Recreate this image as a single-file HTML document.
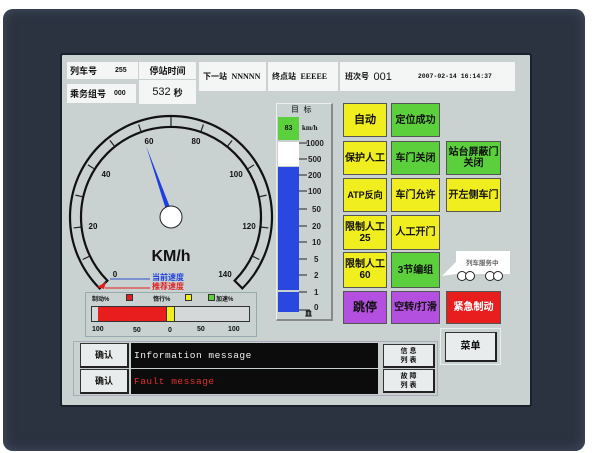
<!DOCTYPE html>
<html><head><meta charset="utf-8"><style>
*{margin:0;padding:0;box-sizing:border-box}
body{width:600px;height:453px;background:#fff;position:relative;overflow:hidden;font-family:"Liberation Sans","Noto Sans CJK SC",sans-serif;font-weight:bold;color:#111}
.a{position:absolute}
#bez{left:3px;top:9px;width:582px;height:442px;background:#2b3240;border-radius:10px;box-shadow:inset 0 0 12px #455064}
#scr{left:60px;top:53px;width:472px;height:354px;background:#c9d1d1;border:2px solid #1a202c;border-radius:3px}
.c{background:#f4f6f6;font-size:9px;display:flex;align-items:center}
.b{display:flex;align-items:center;justify-content:center;text-align:center;font-size:10px;line-height:11px;border:1px solid #555;font-family:"Liberation Sans","WenQuanYi Zen Hei",sans-serif}
.y{background:#f0ee1e}.g{background:#5cd03c}.p{background:#b450e0}.r{background:#e81e1e;color:#fff}
.btn{background:#e8ecec;border:1px solid #333;border-right:2px solid #222;border-bottom:2px solid #222;font-size:9px;display:flex;align-items:center;justify-content:center;text-align:center;line-height:9px}
.msg{background:#0c0c0c;font-family:"Liberation Mono",monospace;font-size:9.5px;font-weight:normal;display:flex;align-items:center;padding-left:3px;letter-spacing:.5px}
</style></head><body>
<div class="a" id="bez"></div>
<div class="a" id="scr"></div>
<div class="a c" style="left:67px;top:62px;width:71px;height:17px;padding-left:3px">列车号<span style="margin-left:18px;font-size:7px">255</span></div>
<div class="a c" style="left:139px;top:62px;width:57px;height:17px;justify-content:center">停站时间</div>
<div class="a c" style="left:67px;top:84px;width:69px;height:19px;padding-left:3px">乘务组号<span style="margin-left:8px;font-size:7px">000</span></div>
<div class="a c" style="left:139px;top:80px;width:57px;height:24px;justify-content:center;font-size:11px;font-weight:normal">532 <b style="font-size:9px;margin-left:3px">秒</b></div>
<div class="a c" style="left:199px;top:62px;width:67px;height:29px;padding-left:4px;font-size:8px">下一站&nbsp;&nbsp;<span style="font-family:'Liberation Serif';font-size:8px">NNNNN</span></div>
<div class="a c" style="left:268px;top:62px;width:70px;height:29px;padding-left:4px;font-size:8px">终点站&nbsp;&nbsp;<span style="font-family:'Liberation Serif';font-size:8px">EEEEE</span></div>
<div class="a c" style="left:340px;top:62px;width:175px;height:29px;padding-left:5px;font-size:8px">班次号&nbsp;&nbsp;<span style="font-size:11px;font-weight:normal">001</span><span style="margin-left:26px;font-size:6.5px;font-family:'Liberation Mono'">2007-02-14 16:14:37</span></div>
<svg class="a" style="left:0;top:0" width="600" height="453">
<path d="M99.6 288.4 A101 101 0 1 1 242.4 288.4 L234.6 280.6 A90 90 0 1 0 107.4 280.6 Z" fill="#c9d1d1" stroke="#111" stroke-width="2.2"/>
<g stroke="#222" stroke-width="1.2">
<line x1="171" y1="119" x2="171" y2="126" transform="rotate(-135 171 217)"/>
<line x1="171" y1="119" x2="171" y2="126" transform="rotate(-115.7 171 217)"/>
<line x1="171" y1="119" x2="171" y2="126" transform="rotate(-96.4 171 217)"/>
<line x1="171" y1="119" x2="171" y2="126" transform="rotate(-77.1 171 217)"/>
<line x1="171" y1="119" x2="171" y2="126" transform="rotate(-57.9 171 217)"/>
<line x1="171" y1="119" x2="171" y2="126" transform="rotate(-38.6 171 217)"/>
<line x1="171" y1="119" x2="171" y2="126" transform="rotate(-19.3 171 217)"/>
<line x1="171" y1="117" x2="171" y2="126" transform="rotate(0 171 217)"/>
<line x1="171" y1="119" x2="171" y2="126" transform="rotate(19.3 171 217)"/>
<line x1="171" y1="119" x2="171" y2="126" transform="rotate(38.6 171 217)"/>
<line x1="171" y1="119" x2="171" y2="126" transform="rotate(57.9 171 217)"/>
<line x1="171" y1="119" x2="171" y2="126" transform="rotate(77.1 171 217)"/>
<line x1="171" y1="119" x2="171" y2="126" transform="rotate(96.4 171 217)"/>
<line x1="171" y1="119" x2="171" y2="126" transform="rotate(115.7 171 217)"/>
</g>
<polygon points="171,142 168.5,214 173.5,214" fill="#1e3ee0" transform="rotate(-19.3 171 217)"/>
<circle cx="171" cy="217" r="11" fill="#fff" stroke="#222" stroke-width="1"/>
<g font-family="Liberation Sans" font-weight="bold" font-size="8" fill="#111" text-anchor="middle">
<text x="149" y="144">60</text><text x="196" y="144">80</text>
<text x="106" y="177">40</text><text x="236" y="177">100</text>
<text x="93" y="229">20</text><text x="249" y="229">120</text>
<text x="115" y="277">0</text><text x="225" y="277">140</text>
</g>
<text x="171" y="261" font-family="Liberation Sans" font-size="16" text-anchor="middle" fill="#111">KM/h</text>
<line x1="110" y1="279" x2="150" y2="279" stroke="#3050d0" stroke-width="1"/>
<line x1="105" y1="288" x2="150" y2="288" stroke="#e02020" stroke-width="1"/>
<polygon points="97,287 106,282 104,289" fill="#e02020"/>
<text x="152" y="280" font-size="8" fill="#2040e0" font-family="Noto Sans CJK SC" font-weight="bold">当前速度</text>
<text x="152" y="289" font-size="8" fill="#e02020" font-family="Noto Sans CJK SC" font-weight="bold">推荐速度</text>
</svg>
<div class="a" style="left:85px;top:292px;width:172px;height:45px;border:1px solid #9aa;"></div>
<div class="a" style="left:92px;top:294px;font-size:6px">制动%</div>
<div class="a" style="left:126px;top:294px;width:7px;height:7px;background:#e02020;border:1px solid #333"></div>
<div class="a" style="left:153px;top:294px;font-size:6px">惰行%</div>
<div class="a" style="left:185px;top:294px;width:7px;height:7px;background:#f0ee1e;border:1px solid #333"></div>
<div class="a" style="left:208px;top:294px;width:7px;height:7px;background:#5cd03c;border:1px solid #333"></div>
<div class="a" style="left:216px;top:294px;font-size:6px">加速%</div>
<div class="a" style="left:91px;top:306px;width:159px;height:16px;background:#d4d8d8;border:1px solid #333"></div>
<div class="a" style="left:98px;top:307px;width:69px;height:14px;background:#e81e1e;border-right:1px solid #333"></div>
<div class="a" style="left:167px;top:307px;width:8px;height:14px;background:#f0ee1e;border-right:1px solid #333"></div>
<div class="a" style="left:92px;top:326px;font-size:7px">100</div>
<div class="a" style="left:133px;top:327px;font-size:7px">50</div>
<div class="a" style="left:168px;top:327px;font-size:7px">0</div>
<div class="a" style="left:197px;top:326px;font-size:7px">50</div>
<div class="a" style="left:228px;top:326px;font-size:7px">100</div>
<div class="a" style="left:276px;top:103px;width:57px;height:218px;border:1px solid #eee;border-right:2px solid #888;border-bottom:2px solid #888"></div>
<div class="a" style="left:291px;top:104px;font-size:8px;font-weight:normal">目&nbsp;&nbsp;标</div>
<div class="a" style="left:278px;top:117px;width:21px;height:23px;background:#5cd03c;font-size:7px;display:flex;align-items:center;justify-content:center">83</div>
<div class="a" style="left:302px;top:124px;font-size:7px;font-family:'Liberation Serif'">km/h</div>
<div class="a" style="left:278px;top:142px;width:21px;height:24px;background:#fff"></div>
<div class="a" style="left:278px;top:167px;width:21px;height:123px;background:#2a48e0"></div>
<div class="a" style="left:278px;top:292px;width:21px;height:20px;background:#2a48e0"></div>
<svg class="a" style="left:296px;top:138px" width="40" height="180">
<g stroke="#222" stroke-width="1"><line x1="3" y1="5" x2="11" y2="5"/><line x1="3" y1="21" x2="11" y2="21"/><line x1="3" y1="37" x2="11" y2="37"/><line x1="3" y1="53" x2="11" y2="53"/><line x1="3" y1="71" x2="11" y2="71"/><line x1="3" y1="88" x2="11" y2="88"/><line x1="3" y1="104" x2="11" y2="104"/><line x1="3" y1="121" x2="11" y2="121"/><line x1="3" y1="137" x2="11" y2="137"/><line x1="3" y1="154" x2="11" y2="154"/><line x1="3" y1="172" x2="14" y2="172"/></g>
<g font-family="Liberation Sans" font-size="8" fill="#222"><text x="10" y="8">1000</text><text x="12" y="24">500</text><text x="12" y="40">200</text><text x="12" y="56">100</text><text x="16" y="74">50</text><text x="16" y="91">20</text><text x="16" y="107">10</text><text x="18" y="124">5</text><text x="18" y="140">2</text><text x="18" y="157">1</text><text x="18" y="172">0</text></g>
<text x="9" y="178" font-size="7" font-family="Noto Sans CJK SC">皿</text>
</svg>
<div class="a b y" style="left:343px;top:103px;width:44px;height:34px;font-size:11px">自动</div>
<div class="a b g" style="left:391px;top:103px;width:49px;height:34px">定位成功</div>
<div class="a b y" style="left:343px;top:141px;width:44px;height:34px">保护人工</div>
<div class="a b g" style="left:391px;top:141px;width:49px;height:34px">车门关闭</div>
<div class="a b g" style="left:446px;top:141px;width:55px;height:34px">站台屏蔽门<br>关闭</div>
<div class="a b y" style="left:343px;top:178px;width:44px;height:34px;font-size:9px">ATP反向</div>
<div class="a b y" style="left:391px;top:178px;width:49px;height:34px">车门允许</div>
<div class="a b y" style="left:446px;top:178px;width:55px;height:34px">开左侧车门</div>
<div class="a b y" style="left:343px;top:215px;width:44px;height:35px">限制人工<br>25</div>
<div class="a b y" style="left:391px;top:215px;width:49px;height:35px">人工开门</div>
<div class="a b y" style="left:343px;top:252px;width:44px;height:36px">限制人工<br>60</div>
<div class="a b g" style="left:391px;top:252px;width:49px;height:36px">3节编组</div>
<div class="a b p" style="left:343px;top:291px;width:44px;height:33px;font-size:12px">跳停</div>
<div class="a b p" style="left:391px;top:291px;width:49px;height:33px">空转/打滑</div>
<div class="a b r" style="left:446px;top:291px;width:55px;height:33px">紧急制动</div>
<svg class="a" style="left:440px;top:248px" width="75" height="36">
<path d="M2 28 L16 14 L16 3 L70 3 L70 26 L16 26 Z" fill="#fff"/>
<text x="26" y="17" font-size="6.5" fill="#666" font-family="Noto Sans CJK SC">列车服务中</text>
<g fill="#fff" stroke="#222" stroke-width="1"><circle cx="22" cy="28" r="4.5"/><circle cx="30" cy="28" r="4.5"/><circle cx="50" cy="28" r="4.5"/><circle cx="58" cy="28" r="4.5"/></g>
</svg>
<div class="a" style="left:73px;top:341px;width:365px;height:55px;border:1px solid #aab"></div>
<div class="a btn" style="left:80px;top:343px;width:49px;height:25px">确认</div>
<div class="a btn" style="left:80px;top:369px;width:49px;height:25px">确认</div>
<div class="a msg" style="left:131px;top:343px;width:247px;height:25px;color:#eee">Information message</div>
<div class="a msg" style="left:131px;top:369px;width:247px;height:25px;color:#e03030">Fault message</div>
<div class="a btn" style="left:383px;top:344px;width:52px;height:24px;font-size:7px">信 息<br>列 表</div>
<div class="a btn" style="left:383px;top:369px;width:52px;height:24px;font-size:7px">故 障<br>列 表</div>
<div class="a" style="left:440px;top:328px;width:61px;height:37px;border:1px solid #e8eeee"></div>
<div class="a btn" style="left:445px;top:332px;width:52px;height:30px;font-size:10px">菜单</div>
</body></html>
